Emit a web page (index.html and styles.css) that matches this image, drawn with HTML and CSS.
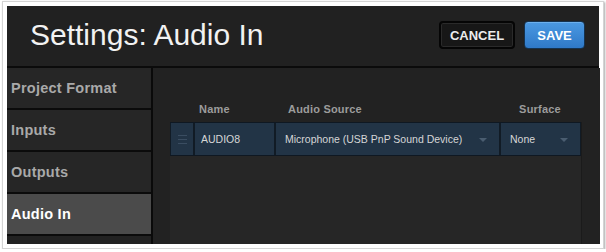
FILE: index.html
```html
<!DOCTYPE html>
<html>
<head>
<meta charset="utf-8">
<link rel="stylesheet" href="styles.css">
</head>
<body>
<div class="photo">
  <div class="app">
    <header class="topbar">
      <h1 class="title">Settings: Audio In</h1>
      <div class="actions">
        <button class="btn btn-cancel">CANCEL</button>
        <button class="btn btn-save">SAVE</button>
      </div>
    </header>
    <div class="body">
      <nav class="sidebar">
        <div class="nav-item">Project Format</div>
        <div class="nav-item">Inputs</div>
        <div class="nav-item">Outputs</div>
        <div class="nav-item active">Audio In</div>
      </nav>
      <main class="main">
        <div class="thead">
          <div></div>
          <div class="th th-name">Name</div>
          <div class="th th-source">Audio Source</div>
          <div class="th th-surface">Surface</div>
        </div>
        <div class="tbody">
          <div class="row">
            <div class="cell handle">
              <svg width="9" height="9" viewBox="0 0 9 9"><path d="M0 0.5H9M0 4.5H9M0 8.5H9" stroke="#3a4d61" stroke-width="1"/></svg>
            </div>
            <div class="cell name">AUDIO8</div>
            <div class="cell select">Microphone (USB PnP Sound Device)<span class="caret"></span></div>
            <div class="cell select surface">None<span class="caret"></span></div>
          </div>
        </div>
      </main>
    </div>
  </div>
</div>
</body>
</html>
```
FILE: styles.css
```css
* { box-sizing: border-box; }
html, body { margin: 0; padding: 0; background: #fff; }
body { padding: 1px 0 0 2px; font-family: "Liberation Sans", Arial, sans-serif; }

.photo {
  width: 602px;
  height: 248px;
  border: 1px solid #d4d4d4;
  padding: 4px;
  background: #fff;
  box-shadow: 1px 1px 2px rgba(0,0,0,0.35);
}

.app {
  width: 592px;
  height: 238px;
  background: #222;
  display: flex;
  flex-direction: column;
}

.topbar {
  height: 62px;
  flex: none;
  background: #212121;
  border-bottom: 2px solid #0b0b0b;
  display: flex;
  align-items: center;
  justify-content: space-between;
  padding: 0 14px 2px 23px;
}

.title {
  margin: 0;
  font-weight: normal;
  font-size: 30px;
  color: #f2f2f2;
  letter-spacing: 0;
}

.actions { display: flex; gap: 9px; }

.btn {
  height: 28px;
  border-radius: 4px;
  font-family: "Liberation Sans", Arial, sans-serif;
  font-weight: bold;
  font-size: 13px;
  padding: 0;
  cursor: pointer;
}
.btn-cancel {
  width: 76px;
  background: #171717;
  border: 2px solid #050505;
  color: #ececec;
  box-shadow: inset 0 0 0 1px #2a2a2a;
}
.btn-save {
  width: 61px;
  background: linear-gradient(#4b99e2, #2f79c8);
  border: 1px solid #15324f;
  color: #fff;
  box-shadow: inset 0 1px 0 #6cb0ee;
}

.body { flex: 1; display: flex; min-height: 0; }

.sidebar {
  width: 146px;
  flex: none;
  border-right: 2px solid #0a0a0a;
  background: #222;
}
.nav-item {
  height: 42px;
  border-bottom: 2px solid #0b0b0b;
  background: #262626;
  color: #a9a9a9;
  font-weight: bold;
  font-size: 14.5px;
  line-height: 40px;
  padding-left: 4px;
  letter-spacing: 0.25px;
}
.nav-item.active { background: #4b4b4b; color: #fff; }

.main {
  flex: 1;
  display: flex;
  flex-direction: column;
  padding: 30px 18px 0 17px;
  background: #222;
}

.thead {
  display: grid;
  grid-template-columns: 23px 81px 225px 82px;
  height: 24px;
  line-height: 22px;
  color: #9c9c9c;
  font-weight: bold;
  font-size: 11px;
  letter-spacing: 0.2px;
}
.th-name { padding-left: 6px; }
.th-source { padding-left: 14px; }
.th-surface { text-align: center; }

.tbody {
  flex: 1;
  background: #262626;
  border-right: 1px solid #1b1b1b;
}

.row {
  display: grid;
  grid-template-columns: 23px 81px 225px 82px;
  height: 34px;
  background: #223446;
  border-top: 1px solid #0f1822;
  border-bottom: 1px solid #0f1822;
  color: #d6d6d6;
  font-size: 10.5px;
}
.cell {
  display: flex;
  align-items: center;
  border-left: 2px solid #111b25;
  position: relative;
}
.cell:first-child { border-left: 1px solid #111b25; }
.handle { justify-content: center; padding-left: 0; padding-top: 1px; }
.name { padding-left: 6px; }
.select { padding-left: 9px; }
.surface { padding-left: 9px; border-right: 1px solid #111b25; }

.caret {
  position: absolute;
  right: 12px;
  top: 15px;
  width: 0;
  height: 0;
  border-left: 4px solid transparent;
  border-right: 4px solid transparent;
  border-top: 4px solid #4a5d70;
}
```
